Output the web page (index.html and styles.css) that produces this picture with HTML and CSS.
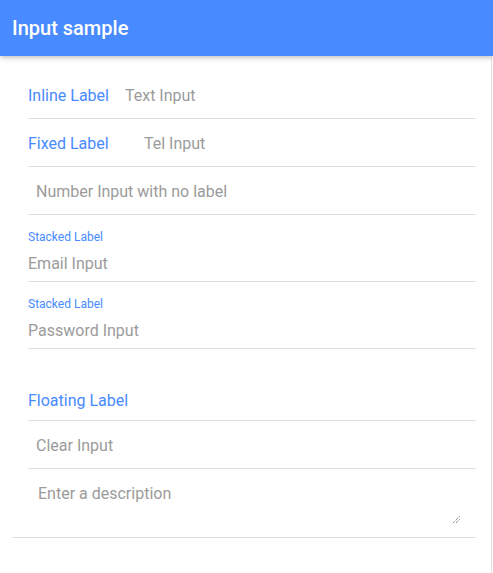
FILE: index.html
```html
<!DOCTYPE html>
<html lang="en">
<head>
<meta charset="utf-8">
<title>Input sample</title>
<link rel="stylesheet" href="styles.css">
</head>
<body>
<header class="toolbar">
  <div class="title">Input sample</div>
</header>
<main class="content">
  <div class="list">
    <div class="item">
      <div class="inner row">
        <span class="label inline">Inline Label</span>
        <span class="input">Text Input</span>
      </div>
    </div>
    <div class="item">
      <div class="inner row">
        <span class="label fixed">Fixed Label</span>
        <span class="input">Tel Input</span>
      </div>
    </div>
    <div class="item">
      <div class="inner row">
        <span class="input">Number Input with no label</span>
      </div>
    </div>
    <div class="item">
      <div class="inner stacked">
        <span class="label small">Stacked Label</span>
        <span class="input flush">Email Input</span>
      </div>
    </div>
    <div class="item">
      <div class="inner stacked">
        <span class="label small">Stacked Label</span>
        <span class="input flush">Password Input</span>
      </div>
    </div>
    <div class="item">
      <div class="inner floating">
        <span class="label">Floating Label</span>
      </div>
    </div>
    <div class="item">
      <div class="inner row">
        <span class="input">Clear Input</span>
      </div>
    </div>
    <div class="item textarea-item">
      <div class="textarea">
        <span class="ta-text">Enter a description</span>
        <svg class="grip" width="8" height="8" viewBox="0 0 8 8">
          <line x1="7.5" y1="0.5" x2="0.5" y2="7.5" stroke="#555" stroke-width="1" stroke-dasharray="1 1"/>
          <line x1="7.5" y1="3.5" x2="3.5" y2="7.5" stroke="#555" stroke-width="1" stroke-dasharray="1 1"/>
        </svg>
      </div>
    </div>
  </div>
</main>
</body>
</html>
```
FILE: styles.css
```css
* { box-sizing: border-box; }
html, body {
  margin: 0;
  padding: 0;
  background: #fff;
  font-family: Roboto, "Noto Sans", sans-serif;
}
.toolbar {
  height: 56px;
  background: #488aff;
  display: flex;
  align-items: center;
  padding: 0 12px;
  position: relative;
  z-index: 2;
  box-shadow: 0 2px 4px -1px rgba(0,0,0,.2), 0 4px 5px 0 rgba(0,0,0,.07);
}
.title {
  color: #fff;
  font-size: 20px;
  font-weight: 500;
}
.content {
  width: 492px;
  min-height: 517px;
  border-right: 1px solid #e4e4e4;
  padding: 15px 0 0 12px;
}
.list {
  width: 464px;
}
.item {
  padding-left: 16px;
}
.inner {
  border-bottom: 1px solid #dedede;
  font-size: 16px;
}
.row {
  height: 48px;
  display: flex;
  align-items: center;
  padding-top: 2px;
}
.label {
  color: #488aff;
  font-size: 16px;
  line-height: 20px;
  white-space: nowrap;
}
.label.inline {
  margin-right: 8px;
}
.label.fixed {
  flex: 0 0 100px;
  margin-right: 8px;
}
.input {
  color: #9b9b9b;
  font-size: 16px;
  line-height: 20px;
  margin-left: 8px;
}
.input.flush {
  margin-left: 0;
}
.stacked {
  display: flex;
  flex-direction: column;
  height: 67px;
  padding-top: 15px;
}
.label.small {
  font-size: 12px;
  line-height: 14px;
}
.stacked .input {
  margin-top: 10px;
}
.floating {
  height: 72px;
  padding-top: 42px;
}
.floating .label {
  display: block;
}
.textarea-item {
  border-bottom: 1px solid #dedede;
  height: 69px;
  padding-top: 13px;
}
.textarea {
  position: relative;
  margin-left: 8px;
  width: 425px;
  height: 43px;
  padding: 2px 2px;
}
.ta-text {
  display: block;
  color: #9b9b9b;
  font-size: 16px;
  line-height: 20px;
}
.grip {
  position: absolute;
  right: 1px;
  bottom: 1px;
  display: block;
}
```
